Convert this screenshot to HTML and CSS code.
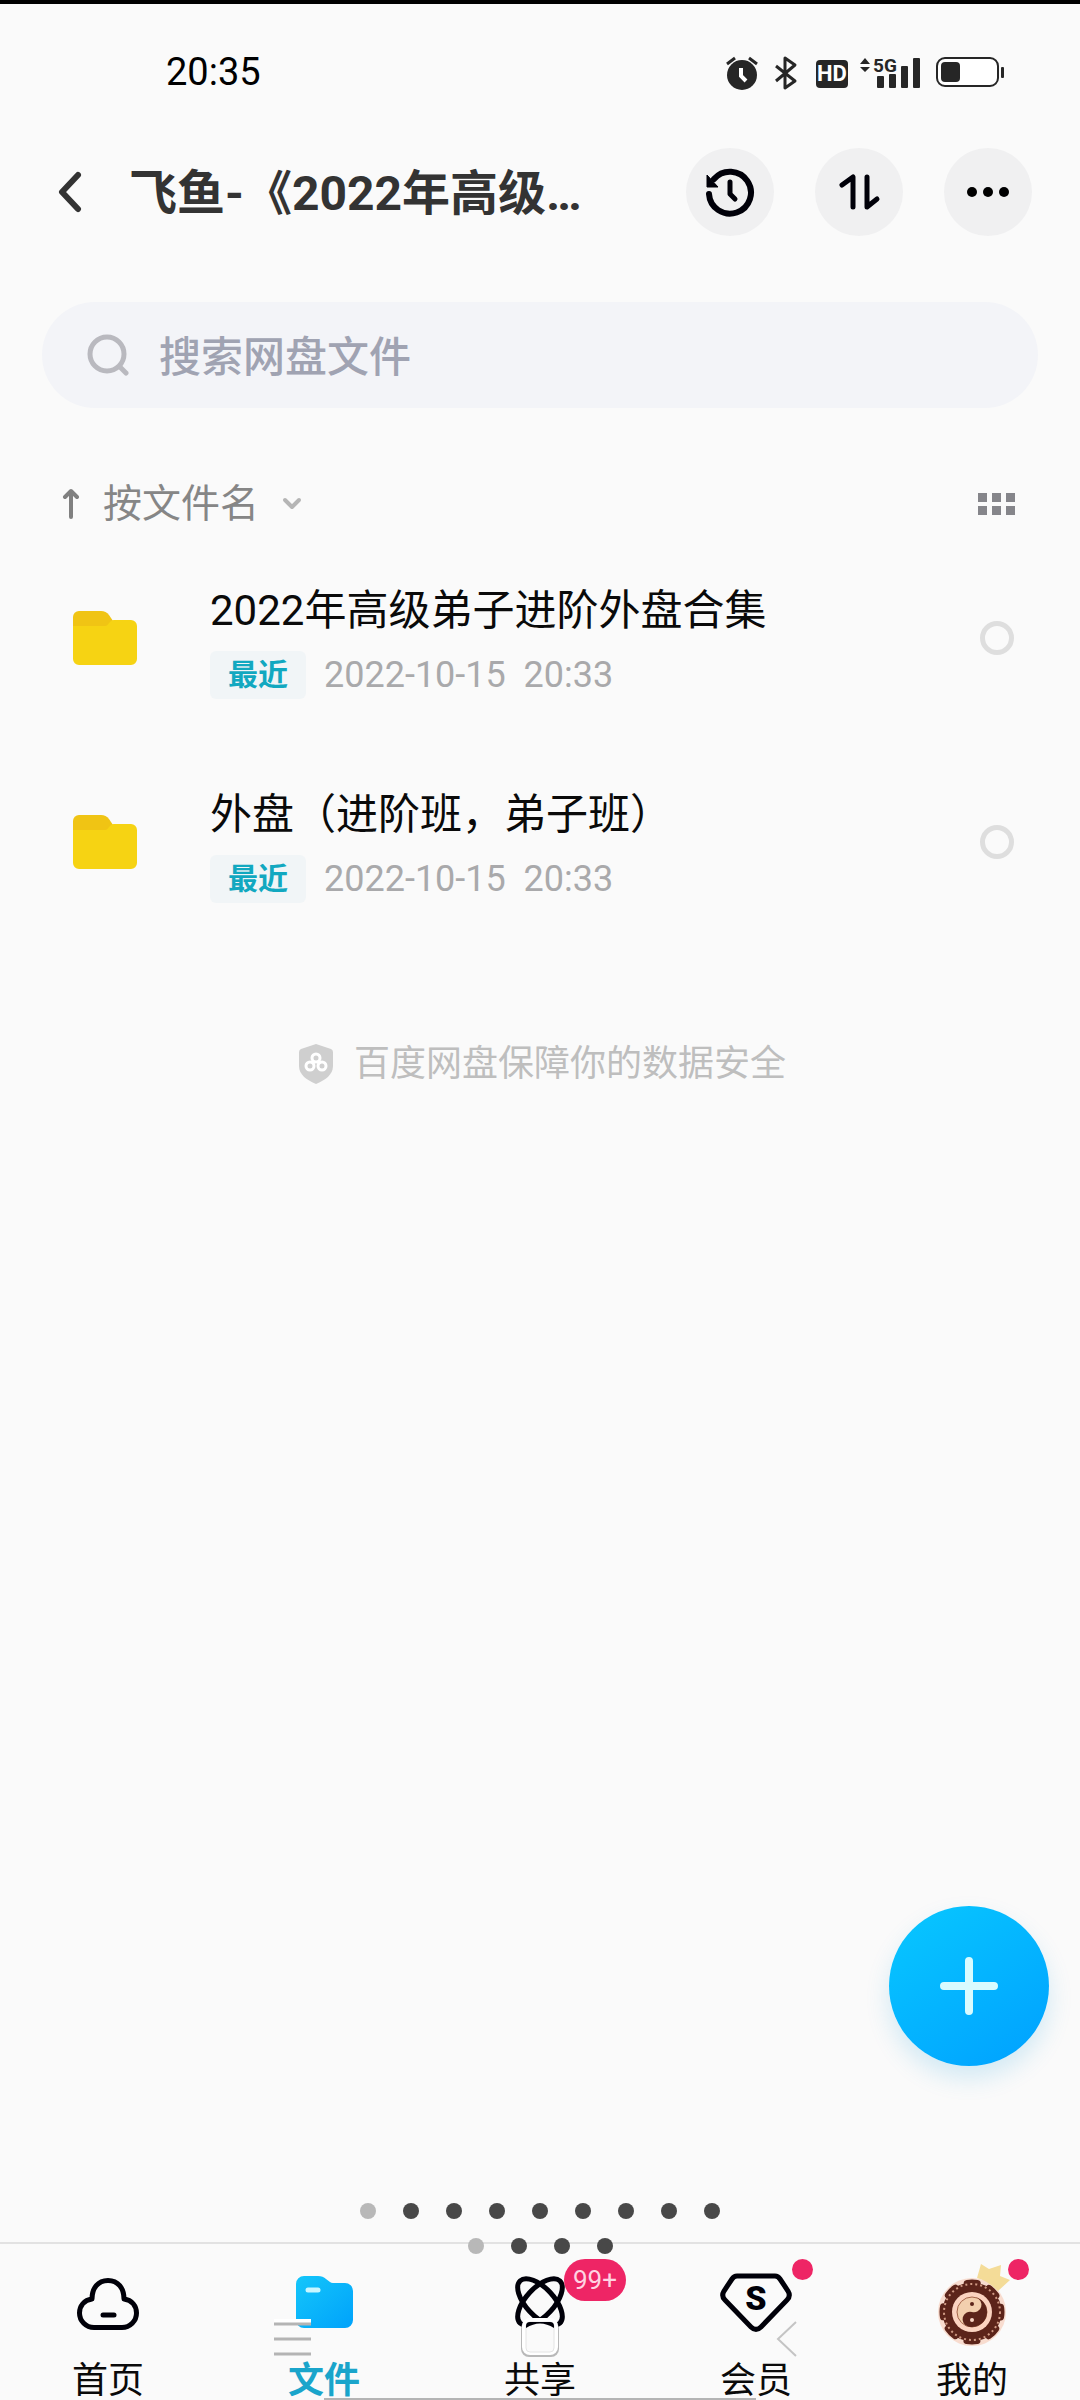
FILE: index.html
```html
<!DOCTYPE html>
<html lang="zh-CN">
<head>
    <meta charset="UTF-8">
    <meta name="viewport" content="width=device-width, initial-scale=1.0">
    <title>百度网盘</title>
    <link rel="stylesheet" href="styles.css">
</head>
<body>
    <div class="status-bar">
        <span class="clock">20:35</span>
        <svg class="status-icons" width="284" height="40" viewBox="0 0 284 40">
            <!-- alarm -->
            <circle cx="20" cy="23" r="15" fill="#262626"/>
            <path d="M5 12l8-6M27 6l8 6" stroke="#262626" stroke-width="3" fill="none"/>
            <path d="M19 16v8l5 5" stroke="#fff" stroke-width="4" fill="none"/>
            <!-- bluetooth -->
            <path d="M54 14l19 15-10 7V6l10 7-19 16" stroke="#262626" stroke-width="3" fill="none" stroke-linejoin="round"/>
            <!-- hd -->
            <rect x="94" y="8" width="32" height="28" rx="4" fill="#262626"/>
            <text x="110" y="29" class="hd-text">HD</text>
            <!-- signal -->
            <path d="M138 12l5-6 5 6zM138 15l5 5 5-5z" fill="#262626"/>
            <text x="151" y="20" class="net-text">5G</text>
            <rect x="155" y="24" width="7" height="12" rx="1" fill="#262626"/>
            <rect x="167" y="22" width="7" height="14" rx="1" fill="#262626"/>
            <rect x="179" y="14" width="7" height="22" rx="1" fill="#262626"/>
            <rect x="191" y="6" width="7" height="30" rx="1" fill="#262626"/>
            <!-- battery -->
            <rect x="215" y="6" width="61" height="28" rx="8" fill="#fff" stroke="#262626" stroke-width="2"/>
            <rect x="219" y="10" width="19" height="20" rx="4" fill="#262626"/>
            <rect x="279" y="15" width="3" height="11" rx="1" fill="#262626"/>
        </svg>
    </div>

    <header class="top-bar">
        <button class="back" aria-label="返回">
            <svg width="24" height="42" viewBox="0 0 24 42"><path d="M20 4L4 21l16 17" fill="none" stroke="#333" stroke-width="6" stroke-linecap="round" stroke-linejoin="round"/></svg>
        </button>
        <h1 class="title">飞鱼-《2022年高级…</h1>
        <div class="actions">
            <button class="round-btn" aria-label="历史">
                <svg width="52" height="52" viewBox="0 0 52 52">
                    <path d="M5 28a21 21 0 1 0 5-15" fill="none" stroke="#000009" stroke-width="6" stroke-linecap="round"/>
                    <path d="M3 9v12h11z" fill="#000009" stroke="#000009" stroke-linejoin="round"/>
                    <path d="M26 16v12l5 5" fill="none" stroke="#000009" stroke-width="5" stroke-linecap="round" stroke-linejoin="round"/>
                </svg>
            </button>
            <button class="round-btn" aria-label="传输">
                <svg width="44" height="44" viewBox="0 0 44 44"><path d="M5 15l11-8v30M30 7v30l10-8" fill="none" stroke="#000009" stroke-width="5" stroke-linecap="round" stroke-linejoin="round"/></svg>
            </button>
            <button class="round-btn" aria-label="更多">
                <svg width="44" height="12" viewBox="0 0 44 12"><circle cx="6" cy="6" r="5"/><circle cx="22" cy="6" r="5"/><circle cx="38" cy="6" r="5"/></svg>
            </button>
        </div>
    </header>

    <form class="search" role="search">
        <svg width="42" height="42" viewBox="0 0 42 42"><circle cx="20" cy="20" r="17" fill="none" stroke="#b9b9bf" stroke-width="5"/><path d="M33 33l6 6" stroke="#b9b9bf" stroke-width="5" stroke-linecap="round"/></svg>
        <input type="search" placeholder="搜索网盘文件" aria-label="搜索网盘文件">
    </form>

    <div class="sort-bar">
        <button class="sort">
            <svg width="18" height="32" viewBox="0 0 18 32"><path d="M9 29V4M3 9l6-6 6 6" fill="none" stroke="#808080" stroke-width="4" stroke-linecap="round" stroke-linejoin="round"/></svg>
            <span>按文件名</span>
            <svg width="20" height="16" viewBox="0 0 20 16"><path d="M3 4l7 7 7-7" fill="none" stroke="#b5b5b5" stroke-width="4" stroke-linecap="round" stroke-linejoin="round"/></svg>
        </button>
        <button class="grid-btn" aria-label="宫格视图">
            <svg width="37" height="23" viewBox="0 0 37 23" fill="#85858a"><path d="M0 0h9v9H0zM14 0h9v9h-9zM28 0h9v9h-9zM0 13h9v9H0zM14 13h9v9h-9zM28 13h9v9h-9z"/></svg>
        </button>
    </div>

    <main>
        <ul class="files">
            <li class="file">
                <svg width="66" height="58" viewBox="0 0 66 58">
                    <path d="M1 8a6 6 0 0 1 6-6h22q5 0 8 4l4 6v12H1z" fill="#f0c414"/>
                    <path d="M1 17h32c4 0 4-6 9-6h17a6 6 0 0 1 6 6v33a6 6 0 0 1-6 6H7a6 6 0 0 1-6-6z" fill="#f6d313"/>
                </svg>
                <label class="info" for="file-1">
                    <span class="name">2022年高级弟子进阶外盘合集</span>
                    <span class="meta"><span class="tag">最近</span><span class="date">2022-10-15&nbsp; 20:33</span></span>
                </label>
                <input class="pick" type="checkbox" id="file-1">
            </li>
            <li class="file">
                <svg width="66" height="58" viewBox="0 0 66 58">
                    <path d="M1 8a6 6 0 0 1 6-6h22q5 0 8 4l4 6v12H1z" fill="#f0c414"/>
                    <path d="M1 17h32c4 0 4-6 9-6h17a6 6 0 0 1 6 6v33a6 6 0 0 1-6 6H7a6 6 0 0 1-6-6z" fill="#f6d313"/>
                </svg>
                <label class="info" for="file-2">
                    <span class="name">外盘（进阶班，弟子班）</span>
                    <span class="meta"><span class="tag">最近</span><span class="date">2022-10-15&nbsp; 20:33</span></span>
                </label>
                <input class="pick" type="checkbox" id="file-2">
            </li>
        </ul>

        <p class="safety">
            <svg width="36" height="42" viewBox="0 0 36 42">
                <path d="M18 1l15 5q2 1 2 3v14c0 9-8 14-17 18C9 37 1 32 1 23V9q0-2 2-3z" fill="#cfcfcf"/>
                <g fill="none" stroke="#fff" stroke-width="3"><circle cx="18" cy="15" r="4"/><circle cx="12" cy="23" r="4"/><circle cx="24" cy="23" r="4"/></g>
            </svg>
            百度网盘保障你的数据安全
        </p>
    </main>

    <nav class="tabs">
        <a class="tab" href="#home">
            <svg width="72" height="72" viewBox="0 0 72 72">
                <path d="M20 31C20 20 26 12.500 36 12.500S52 20 52 31C60 32 64.500 38 64.500 45C64.500 53 58 59.500 50 59.500H22C14 59.500 7.500 53 7.500 45C7.500 38 12 32 20 31z" fill="none" stroke="#000009" stroke-width="5" stroke-linejoin="round"/>
                <path d="M31 47h11" stroke="#000009" stroke-width="5" stroke-linecap="round"/>
            </svg>
            <span>首页</span>
        </a>
        <a class="tab active" href="#files">
            <svg width="72" height="72" viewBox="0 0 72 72">
                <defs><linearGradient id="blue" x1="0" y1="0" x2="1" y2="1"><stop offset="0" stop-color="#14c6fa"/><stop offset="1" stop-color="#00a2fb"/></linearGradient></defs>
                <path d="M8 16a8 8 0 0 1 8-8h14q5 0 8 3l4 3q1 1 3 1h12a8 8 0 0 1 8 8v29a8 8 0 0 1-8 8H16a8 8 0 0 1-8-8z" fill="url(#blue)"/>
                <path d="M20 22h10" stroke="#c8f6ff" stroke-width="5" stroke-linecap="round"/>
            </svg>
            <span>文件</span>
        </a>
        <a class="tab" href="#share">
            <svg width="72" height="72" viewBox="0 0 72 72">
                <g fill="none" stroke="#000009" stroke-width="5"><ellipse cx="36" cy="34" rx="29" ry="14" transform="rotate(47 36 34)"/><ellipse cx="36" cy="34" rx="29" ry="14" transform="rotate(-47 36 34)"/></g>
            </svg>
            <span>共享</span>
            <b class="badge">99+</b>
        </a>
        <a class="tab" href="#vip">
            <svg width="72" height="72" viewBox="0 0 72 72">
                <path d="M17 8h38q3 0 5 3l8 12q3 5-1 9L41 59q-5 5-10 0L5 32q-4-4-1-9l8-12q2-3 5-3z" fill="none" stroke="#000009" stroke-width="5"/>
                <text x="36" y="42" class="vip-text">S</text>
            </svg>
            <span>会员</span>
            <i class="dot"></i>
        </a>
        <a class="tab" href="#me">
            <svg width="72" height="80" viewBox="0 0 72 80">
                <circle cx="36" cy="44" r="34" fill="#f8dccf"/>
                <circle cx="36" cy="44" r="24" fill="none" stroke="#5c241a" stroke-width="11"/>
                <circle cx="36" cy="44" r="29" fill="none" stroke="#5c241a" stroke-width="7" stroke-linecap="round" stroke-dasharray="10 12.776" stroke-dashoffset="5"/>
                <circle cx="36" cy="44" r="28" fill="none" stroke="#d09a84" stroke-width="2" stroke-dasharray="2 3"/>
                <circle cx="36" cy="44" r="20" fill="#fbd3c0"/>
                <circle cx="36" cy="44" r="15" fill="#f2cfae" stroke="#a5654a"/>
                <path d="M36 29a15 15 0 0 1 0 30a7.500 7.500 0 0 1 0-15a7.500 7.500 0 0 0 0-15z" fill="#5c241a" transform="rotate(15 36 44)"/>
                <circle cx="36" cy="36" r="2" fill="#5c241a"/><circle cx="36" cy="52" r="2" fill="#f8d5c4"/>
            </svg>
            <span>我的</span>
            <svg class="crown" width="36" height="32" viewBox="0 0 36 32"><path d="M6 2l8 5L26 3l-1 11 10 4-12 11Q13 19 2 16z" fill="#f4dc98"/></svg>
            <i class="dot"></i>
        </a>
    </nav>

    <button class="fab" aria-label="添加">
        <svg width="64" height="64" viewBox="0 0 64 64"><path d="M32 7v50M7 32h50" stroke="#d9fbff" stroke-width="8" stroke-linecap="round"/></svg>
    </button>

    <!-- page dots drawn over the content -->
    <div class="pager">
        <div class="pager-row"><i></i><i></i><i></i><i></i><i></i><i></i><i></i><i></i><i></i></div>
        <div class="pager-row"><i></i><i></i><i></i><i></i></div>
    </div>

    <!-- system navigation keys -->
    <div class="sys-nav">
        <svg width="40" height="40" viewBox="0 0 40 40"><path d="M1 3h37" stroke="#fff" stroke-width="4"/><path d="M1 6h37M1 21h37M1 36h37" stroke="#b4b4b4" stroke-width="3"/></svg>
        <svg width="40" height="40" viewBox="0 0 40 40"><rect x="1" y="3" width="38" height="36" rx="8" fill="#b8b8b8"/><rect x="2" y="0" width="36" height="37" rx="8" fill="#fff"/><rect x="6" y="4" width="28" height="30" rx="4" fill="#fafafa" stroke="#e4e4e4"/><path d="M6 10V8q0-4 4-4h20q4 0 4 4v2Q20 1 6 10z" fill="#000009"/></svg>
        <svg width="40" height="40" viewBox="0 0 40 40"><path d="M29 4L11 21l18 17" fill="none" stroke="#c4c4c4" stroke-width="2"/></svg>
    </div>
    <div class="home-line"></div>
</body>
</html>
```
FILE: styles.css
```css
* {
    box-sizing: border-box;
}

body {
    position: relative;
    display: flex;
    flex-direction: column;
    min-height: 100vh;
    margin: 0;
    border-top: 4px solid #000;
    background: #fafafa;
    color: #0a0a0a;
    font-family: Roboto, "Noto Sans CJK SC", sans-serif;
    overflow-x: hidden;
}

button {
    display: flex;
    align-items: center;
    justify-content: center;
    padding: 0;
    border: none;
    background: none;
    font: inherit;
    cursor: pointer;
}

svg {
    display: block;
    flex: none;
}

/* status bar */
.status-bar {
    display: flex;
    align-items: center;
    justify-content: space-between;
    height: 136px;
    padding: 0 74px 0 166px;
}

.clock {
    font-size: 38px;
    color: #000;
}

.hd-text {
    font: bold 22px Roboto, sans-serif;
    fill: #fff;
    text-anchor: middle;
}

.net-text {
    font: bold 19px Roboto, sans-serif;
    fill: #262626;
}

/* title */
.top-bar {
    display: flex;
    align-items: center;
    height: 104px;
    padding: 0 48px 0 58px;
}

.title {
    flex: 1;
    margin: 0;
    padding: 4px 0 0 47px;
    font-size: 48px;
    line-height: 64px;
    font-weight: bold;
    color: #333;
    white-space: nowrap;
}

.actions {
    display: flex;
    gap: 41px;
}

.round-btn {
    width: 88px;
    height: 88px;
    border-radius: 50%;
    background: #f0f0f1;
}

/* search */
.search {
    display: flex;
    align-items: center;
    gap: 30px;
    height: 106px;
    margin: 58px 42px 0;
    padding: 0 45px;
    border-radius: 53px;
    background: #f3f4f8;
}

.search input {
    flex: 1;
    min-width: 0;
    height: 68px;
    padding: 4px 0 0;
    border: none;
    outline: none;
    background: none;
    font: 500 42px Roboto, "Noto Sans CJK SC", sans-serif;
}

.search input::placeholder {
    color: #a0a3b2;
    opacity: 1;
}

/* sort */
.sort-bar {
    display: flex;
    align-items: center;
    justify-content: space-between;
    margin-top: 64px;
    padding: 0 65px 0 62px;
}

.sort {
    gap: 23px;
    height: 64px;
    font-size: 39px;
    line-height: 64px;
    color: #868686;
}

.grid-btn {
    height: 64px;
}

/* files */
main {
    flex: 1;
}

.files {
    margin: 0;
    padding: 0;
    list-style: none;
}

.file {
    display: flex;
    align-items: center;
    height: 204px;
    padding: 0 66px 0 72px;
}

.info {
    flex: 1;
    display: flex;
    flex-direction: column;
    gap: 8px;
    margin-left: 72px;
    padding-top: 2px;
}

.name {
    font-size: 42px;
    line-height: 64px;
}

.meta {
    display: flex;
    align-items: center;
    gap: 18px;
}

.tag {
    padding: 0 18px;
    border-radius: 6px;
    background: #f1f5f7;
    font-size: 30px;
    line-height: 48px;
    font-weight: bold;
    color: #12a8c0;
}

.date {
    font-size: 36px;
    line-height: 48px;
    color: #a9a9ab;
}

.pick {
    appearance: none;
    width: 34px;
    height: 34px;
    margin: 0;
    border: 5px solid #dedede;
    border-radius: 50%;
}

.safety {
    display: flex;
    align-items: center;
    justify-content: center;
    gap: 20px;
    margin: 88px 0 0;
    padding-left: 4px;
    font-size: 36px;
    line-height: 64px;
    color: #bebebe;
}

/* bottom tabs */
.tabs {
    display: grid;
    grid-template-columns: repeat(5, 1fr);
    height: 158px;
    border-top: 2px solid #e2e2e2;
}

.tab {
    position: relative;
    display: flex;
    flex-direction: column;
    align-items: center;
    justify-content: space-between;
    height: 156px;
    padding-top: 24px;
    font-size: 36px;
    line-height: 38px;
    color: #0a0a0a;
    text-decoration: none;
}

.active {
    font-weight: bold;
    color: #1aa5cb;
}

.vip-text {
    font: 900 34px Roboto, sans-serif;
    fill: #000009;
    text-anchor: middle;
}

.badge {
    position: absolute;
    top: 15px;
    left: calc(50% + 24px);
    padding: 0 9px;
    border-radius: 21px;
    background: #ee2565;
    font-size: 26px;
    line-height: 42px;
    font-weight: normal;
    color: #ffd3e2;
}

.dot {
    position: absolute;
    top: 15px;
    left: calc(50% + 36px);
    width: 21px;
    height: 21px;
    border-radius: 50%;
    background: #ee2565;
}

.crown {
    position: absolute;
    top: 18px;
    left: calc(50% + 3px);
}

/* floating things */
.fab {
    position: absolute;
    right: 31px;
    bottom: 334px;
    width: 160px;
    height: 160px;
    border-radius: 50%;
    background: linear-gradient(145deg, #08c8ff, #00a0ff);
    box-shadow: 0 12px 24px rgba(0, 150, 220, 0.16);
}

.pager {
    position: absolute;
    left: 0;
    right: 0;
    bottom: 146px;
    display: grid;
    gap: 19px;
    pointer-events: none;
}

.pager-row {
    display: flex;
    justify-content: center;
    gap: 27px;
}

.pager-row i {
    width: 16px;
    height: 16px;
    border-radius: 50%;
    background: #484848;
}

.pager-row i:first-child {
    background: #b8b8b8;
}

.sys-nav {
    position: absolute;
    left: 273px;
    right: 273px;
    bottom: 42px;
    display: flex;
    justify-content: space-between;
    pointer-events: none;
}

.home-line {
    position: absolute;
    left: 30%;
    right: 30%;
    bottom: 0;
    height: 2px;
    background: #b4b4b4;
}
```
